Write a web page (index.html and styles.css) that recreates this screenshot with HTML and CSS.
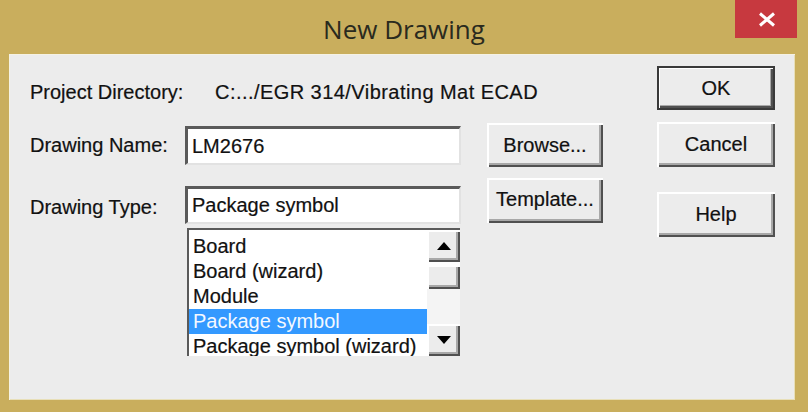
FILE: index.html
```html
<!DOCTYPE html>
<html>
<head>
<meta charset="utf-8">
<link rel="stylesheet" href="styles.css">
</head>
<body>
<div class="window">
  <div class="titlebar">
    <div class="title">New Drawing</div>
    <div class="close">
      <svg width="18" height="15" viewBox="0 0 18 15"><path d="M2 1.5 L16 13.5 M16 1.5 L2 13.5" stroke="#fff" stroke-width="3" fill="none"/></svg>
    </div>
  </div>
  <div class="panel">
    <div class="form">
      <div class="row row-dir">
        <span class="label">Project Directory:</span>
        <span class="dir">C:.../EGR 314/Vibrating Mat ECAD</span>
      </div>
      <div class="row row-name">
        <span class="label">Drawing Name:</span>
        <div class="field"><span>LM2676</span></div>
        <button class="btn">Browse...</button>
      </div>
      <div class="row row-type">
        <span class="label">Drawing Type:</span>
        <div class="field"><span>Package symbol</span></div>
        <button class="btn btn-tpl">Template...</button>
      </div>
      <div class="row row-list">
        <span class="label"></span>
        <div class="listbox">
          <ul class="items">
            <li>Board</li>
            <li>Board (wizard)</li>
            <li>Module</li>
            <li class="sel">Package symbol</li>
            <li>Package symbol (wizard)</li>
          </ul>
          <div class="scroll">
            <div class="sbtn up"><svg width="14" height="8" viewBox="0 0 14 8"><path d="M7 0 L14 8 L0 8 Z" fill="#000"/></svg></div>
            <div class="thumb"></div>
            <div class="track"></div>
            <div class="sbtn down"><svg width="14" height="8" viewBox="0 0 14 8"><path d="M0 0 L14 0 L7 8 Z" fill="#000"/></svg></div>
          </div>
        </div>
      </div>
    </div>
    <div class="actions">
      <button class="btn btn-ok">OK</button>
      <button class="btn btn-cancel">Cancel</button>
      <button class="btn btn-help">Help</button>
    </div>
  </div>
</div>
</body>
</html>
```
FILE: styles.css
```css
html, body {
  margin: 0;
  padding: 0;
  background: #c9ae5d;
  width: 808px;
  height: 412px;
  overflow: hidden;
}
.window {
  width: 808px;
  height: 412px;
  display: flex;
  flex-direction: column;
}
.titlebar {
  height: 54px;
  position: relative;
  display: flex;
  justify-content: center;
}
.title {
  font-family: "Open Sans", "Noto Sans", sans-serif;
  font-size: 26px;
  color: #2a2a1e;
  line-height: 1;
  margin-top: 16px;
  margin-left: 0;
  letter-spacing: 0;
}
.close {
  position: absolute;
  left: 735px;
  top: 0;
  width: 62px;
  height: 38px;
  background: #c7393f;
  display: flex;
  align-items: center;
  justify-content: center;
}
.close svg { margin-top: 0px; margin-left: 2px; }
.panel {
  margin: 0 13px 11px 9px;
  height: 346px;
  background: #ececec;
  box-shadow: inset 1px 1px 0 #f5f2e4, inset -1px -1px 0 #e8dfb8;
  display: flex;
  font-family: "Liberation Sans", Arial, sans-serif;
  font-size: 20px;
  color: #111;
  -webkit-text-stroke: 0.2px #111;
}
.form {
  padding-left: 21px;
  width: 594px;
  display: flex;
  flex-direction: column;
}
.row {
  display: flex;
  align-items: flex-start;
}
.label {
  width: 155px;
  flex: none;
}
.row-dir {
  margin-top: 25px;
  height: 26px;
  line-height: 26px;
}
.dir { margin-left: 30px; letter-spacing: 0.45px; }
.row-name {
  margin-top: 18px;
  height: 44px;
}
.row-name .label { line-height: 44px; }
.row-name .field { margin-top: 3px; height: 39px; }
.row-type {
  margin-top: 11px;
  height: 50px;
}
.row-type .label { margin-top: 16px; line-height: 26px; }
.row-type .field { margin-top: 8px; height: 38px; }
.field {
  width: 276px;
  box-sizing: border-box;
  background: #fff;
  border-top: 3px solid #5a5a5a;
  border-left: 3px solid #5a5a5a;
  border-right: 2px solid #e2e2e2;
  border-bottom: 2px solid #e2e2e2;
  display: flex;
  align-items: center;
  padding-left: 4px;
}
.btn {
  font-family: "Liberation Sans", Arial, sans-serif;
  font-size: 20px;
  color: #111;
  -webkit-text-stroke: 0.2px #111;
  background: #ececec;
  box-sizing: border-box;
  border: none;
  margin: 0;
  padding: 0;
  box-shadow: inset 2px 2px 0 #ffffff, inset -2px -2px 0 #505050, inset -4px -4px 0 #a8a8a8;
}
.row-name .btn {
  margin-left: 26px;
  width: 116px;
  height: 44px;
}
.row-type .btn-tpl {
  margin-left: 26px;
  width: 116px;
  height: 45px;
  padding-bottom: 2px;
}
.row-list {
  margin-top: 0;
}
.listbox {
  width: 273px;
  height: 128px;
  margin-left: 2px;
  box-sizing: border-box;
  background: #fff;
  border-top: 2px solid #5a5a5a;
  border-left: 2px solid #5a5a5a;
  display: flex;
  overflow: hidden;
}
.items {
  list-style: none;
  margin: 0;
  padding: 4px 0 0 0;
  flex: 1;
}
.items li {
  height: 25px;
  line-height: 25px;
  padding-left: 4px;
}
.items li.sel {
  background: #3399ff;
  color: #f4f8ff;
  -webkit-text-stroke: 0;
}
.scroll {
  width: 33px;
  flex: none;
  display: flex;
  flex-direction: column;
}
.sbtn {
  height: 32px;
  background: #ececec;
  box-shadow: inset 2px 2px 0 #ffffff, inset -2px -2px 0 #505050, inset -4px -4px 0 #a8a8a8;
  display: flex;
  align-items: center;
  justify-content: center;
  flex: none;
}
.thumb {
  height: 24px;
  margin-top: 3px;
  background: #ececec;
  box-shadow: inset 2px 2px 0 #ffffff, inset -2px -2px 0 #505050, inset -4px -4px 0 #a8a8a8;
  flex: none;
}
.track {
  flex: 1;
  background: #f4f4f4;
}
.actions {
  display: flex;
  flex-direction: column;
  padding-top: 12px;
  margin-left: 33px;
}
.actions .btn {
  width: 118px;
  height: 45px;
}
.btn-ok {
  height: 44px !important;
  box-shadow: inset 0 0 0 2px #3a3a3a, inset 3px 3px 0 #ffffff, inset -4px -4px 0 #505050, inset -5px -5px 0 #a8a8a8;
}
.btn-cancel { margin-top: 12px; }
.btn-help { margin-top: 25px; }
```
